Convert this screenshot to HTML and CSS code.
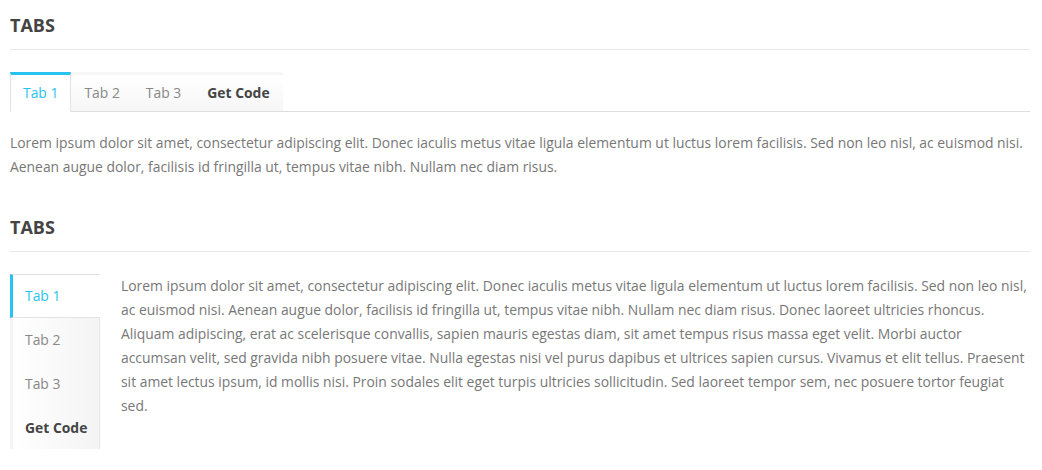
FILE: index.html
```html
<!DOCTYPE html>
<html>
<head>
<meta charset="utf-8">
<link rel="stylesheet" href="styles.css">
</head>
<body>
<div class="page">
  <section class="block">
    <h2 class="title">TABS</h2>
    <ul class="htabs">
      <li class="htab active">Tab 1</li>
      <li class="htab">Tab 2</li>
      <li class="htab">Tab 3</li>
      <li class="htab code">Get Code</li>
    </ul>
    <p class="htext">Lorem ipsum dolor sit amet, consectetur adipiscing elit. Donec iaculis metus vitae ligula elementum ut luctus lorem facilisis. Sed non leo nisl, ac euismod nisi. Aenean augue dolor, facilisis id fringilla ut, tempus vitae nibh. Nullam nec diam risus.</p>
  </section>
  <section class="block second">
    <h2 class="title">TABS</h2>
    <div class="vwrap">
      <ul class="vtabs">
        <li class="vtab active">Tab 1</li>
        <li class="vtab">Tab 2</li>
        <li class="vtab">Tab 3</li>
        <li class="vtab code">Get Code</li>
      </ul>
      <p class="vtext">Lorem ipsum dolor sit amet, consectetur adipiscing elit. Donec iaculis metus vitae ligula elementum ut luctus lorem facilisis. Sed non leo nisl, ac euismod nisi. Aenean augue dolor, facilisis id fringilla ut, tempus vitae nibh. Nullam nec diam risus. Donec laoreet ultricies rhoncus. Aliquam adipiscing, erat ac scelerisque convallis, sapien mauris egestas diam, sit amet tempus risus massa eget velit. Morbi auctor accumsan velit, sed gravida nibh posuere vitae. Nulla egestas nisi vel purus dapibus et ultrices sapien cursus. Vivamus et elit tellus. Praesent sit amet lectus ipsum, id mollis nisi. Proin sodales elit eget turpis ultricies sollicitudin. Sed laoreet tempor sem, nec posuere tortor feugiat sed.</p>
    </div>
  </section>
</div>
</body>
</html>
```
FILE: styles.css
```css
* { box-sizing: border-box; }
html, body { margin: 0; padding: 0; background: #fff; }
body {
  font-family: "Open Sans", "DejaVu Sans", sans-serif;
  font-size: 13.9px;
  line-height: 24px;
  color: #777;
}
.page { padding: 13px 12px 0 10px; }
.title {
  margin: 0;
  font-size: 18px;
  font-weight: 700;
  line-height: 24px;
  color: #444;
  padding-bottom: 12px;
  border-bottom: 1px solid #e8e8e8;
}
.second { margin-top: 36px; }
.htabs {
  list-style: none;
  margin: 22px 0 0;
  padding: 0;
  display: flex;
  border-bottom: 1px solid #dedede;
}
.htab {
  padding: 6px 13px;
  border-top: 3px solid transparent;
  background: linear-gradient(to bottom, #fff 0%, #f6f6f6 100%);
  color: #888;
  margin-bottom: -1px;
  border-bottom: 1px solid #dedede;
}
.htab.active {
  border-top-color: #27c2ef;
  border-left: 1px solid #e2e2e2;
  border-right: 1px solid #e2e2e2;
  border-bottom-color: #fff;
  background: #fff;
  color: #27c2ef;
  padding: 6px 12px;
}
.code { font-weight: 700; color: #444; }
.htext { margin: 19px 0 0; }
.vwrap {
  display: flex;
  align-items: flex-start;
  margin-top: 22px;
}
.vtabs {
  list-style: none;
  margin: 0;
  padding: 0;
  width: 90px;
  flex: none;
}
.vtab {
  height: 44px;
  line-height: 44px;
  padding-left: 12px;
  border-left: 3px solid transparent;
  border-right: 1px solid #e6e6e6;
  background: linear-gradient(to right, #fff 0%, #f4f4f4 100%);
  color: #888;
}
.vtab.active {
  border-left-color: #27c2ef;
  border-top: 1px solid #e2e2e2;
  border-bottom: 1px solid #e2e2e2;
  border-right-color: transparent;
  background: #fff;
  color: #27c2ef;
  line-height: 42px;
}
.vtab.code { color: #444; font-weight: 700; height: 43px; line-height: 43px; }
.vtext { margin: 0; padding-left: 21px; flex: 1; }
```
